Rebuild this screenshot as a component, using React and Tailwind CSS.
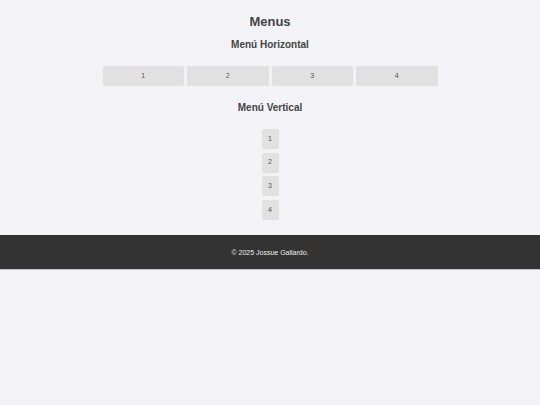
import React from "react";

export default function App() {
  const items = ["1", "2", "3", "4"];
  return (
    <div className="min-h-[405px] w-full bg-[#f3f3f7] font-['Liberation_Sans',Arial,sans-serif] text-[#444]">
      <main className="flex flex-col items-center pt-[14px]">
        <h1 className="text-[13px] leading-[16px] font-bold text-[#444]">Menus</h1>
        <h2 className="mt-[9px] text-[10px] leading-[12px] font-bold text-[#444]">Menú Horizontal</h2>
        <nav className="mt-[15px] grid w-[335px] grid-cols-4 gap-[3px]">
          {items.map((i) => (
            <div
              key={i}
              className="flex h-[20px] items-center justify-center rounded-[2px] bg-[#e1e1e1] text-[7px] text-[#555]"
            >
              {i}
            </div>
          ))}
        </nav>
        <h2 className="mt-[16px] text-[10px] leading-[12px] font-bold text-[#444]">Menú Vertical</h2>
        <nav className="mt-[15px] flex flex-col gap-[3.7px]">
          {items.map((i) => (
            <div
              key={i}
              className="flex h-[20px] w-[17px] items-center justify-center rounded-[2px] bg-[#e1e1e1] text-[7px] text-[#555]"
            >
              {i}
            </div>
          ))}
        </nav>
      </main>
      <footer className="mt-[14.5px] flex h-[35px] items-center justify-center border-b border-[#c8c8c8] bg-[#333333] pt-[4px] text-[7px] text-[#eeeeee]">
        © 2025 Jossue Gallardo.
      </footer>
    </div>
  );
}
